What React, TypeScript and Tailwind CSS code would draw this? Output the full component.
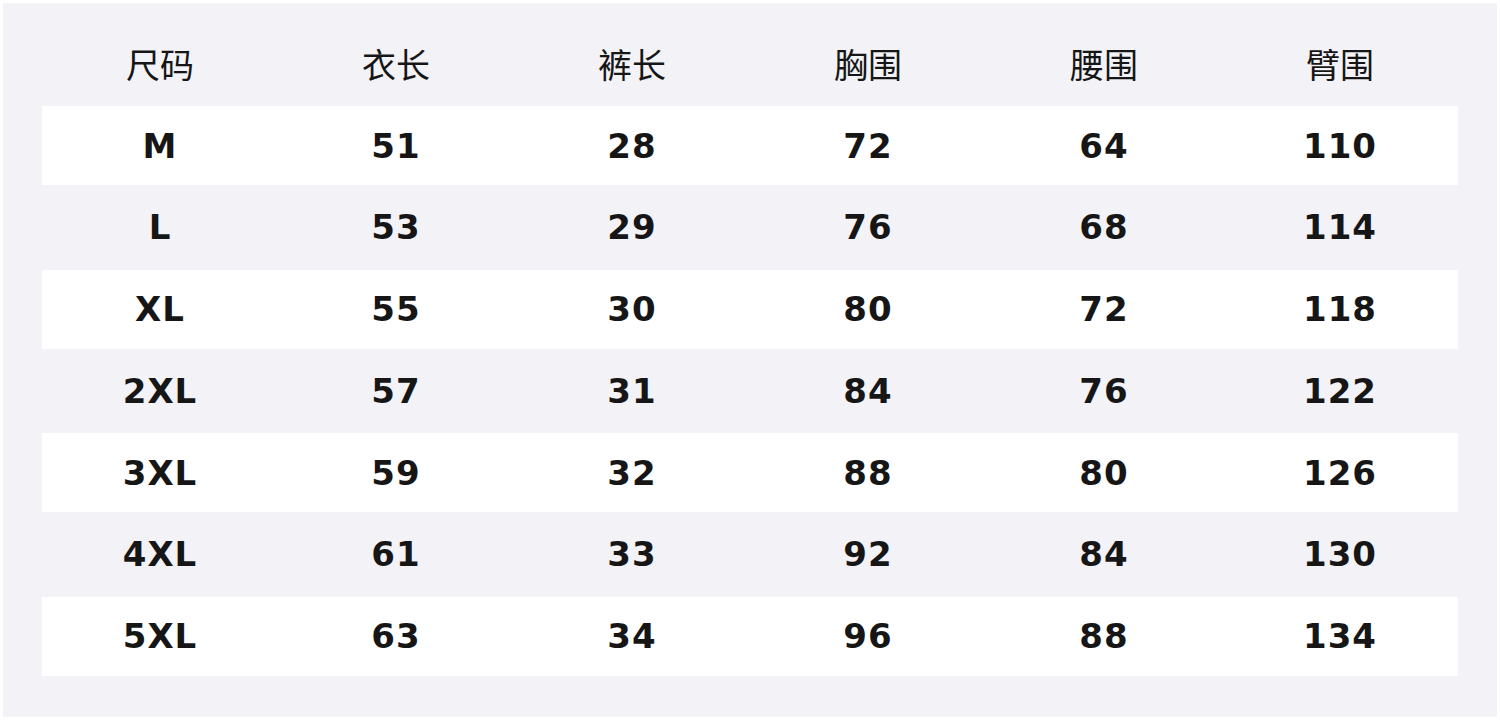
const headers = ["尺码", "衣长", "裤长", "胸围", "腰围", "臂围"];

const rows: string[][] = [
  ["M", "51", "28", "72", "64", "110"],
  ["L", "53", "29", "76", "68", "114"],
  ["XL", "55", "30", "80", "72", "118"],
  ["2XL", "57", "31", "84", "76", "122"],
  ["3XL", "59", "32", "88", "80", "126"],
  ["4XL", "61", "33", "92", "84", "130"],
  ["5XL", "63", "34", "96", "88", "134"],
];

export default function App() {
  return (
    <div className="w-[1500px] h-[720px] bg-white p-[3px]">
      <div className="h-full bg-[#f2f2f7] px-[39px]">
        {/* HEADER */}
        <div className="grid grid-cols-6 h-[103px] items-end pb-[25px]">
          {headers.map((h) => (
            <div
              key={h}
              className="text-center text-[34px] leading-none text-[#161616] font-['Noto_Sans_CJK_SC',sans-serif]"
            >
              {h}
            </div>
          ))}
        </div>

        {/* ROWS */}
        <div className="flex flex-col gap-[2.8px]">
          {rows.map((row, i) => (
            <div
              key={row[0]}
              className={`grid grid-cols-6 h-[79px] items-center ${i % 2 === 0 ? "bg-white" : ""}`}
            >
              {row.map((cell, j) => (
                <div
                  key={j}
                  className="text-center text-[34px] font-bold leading-none tracking-[1px] text-[#161616] font-['DejaVu_Sans',sans-serif]"
                >
                  {cell}
                </div>
              ))}
            </div>
          ))}
        </div>
      </div>
    </div>
  );
}
